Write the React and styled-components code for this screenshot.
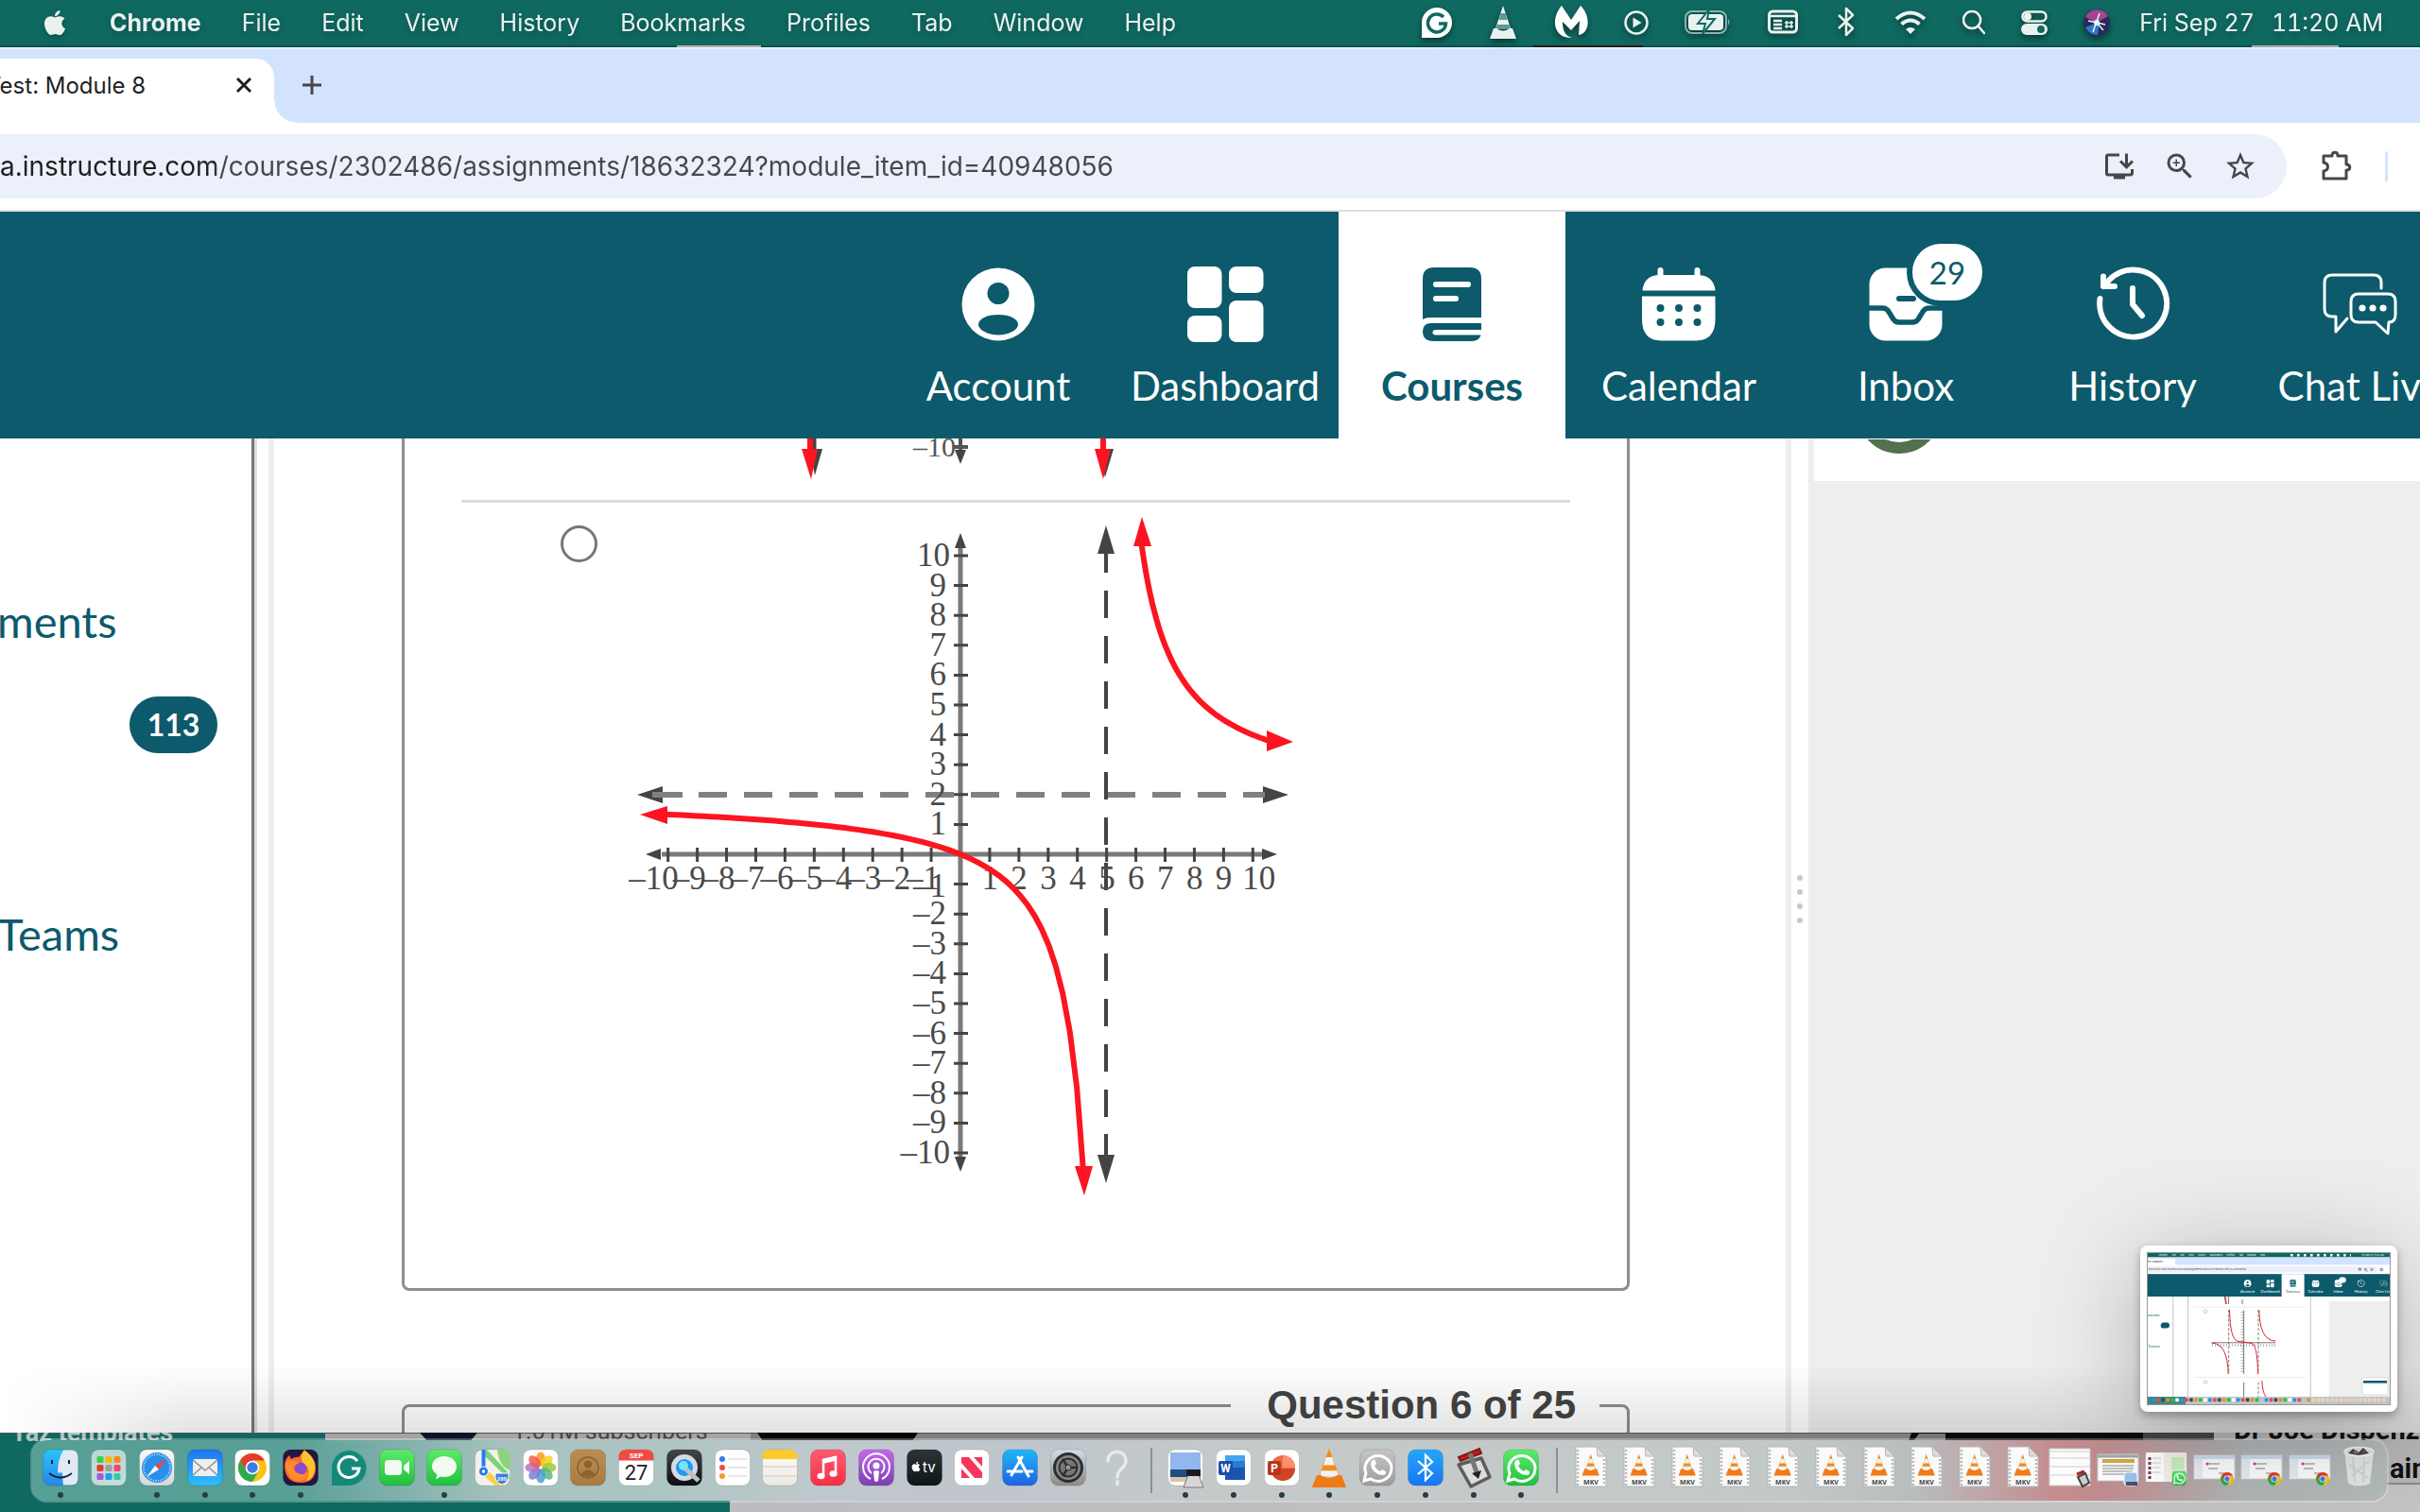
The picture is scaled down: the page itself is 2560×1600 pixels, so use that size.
import React from "react";
import styled, { createGlobalStyle, css } from "styled-components";
import { FaApple } from "react-icons/fa";
import { MdStarOutline, MdZoomIn, MdInstallDesktop } from "react-icons/md";

const teal = "#0c5a6b";
const ui = `Inter, "Liberation Sans", sans-serif`;
const lato = `Lato, "Liberation Sans", sans-serif`;

const Global = createGlobalStyle`
  * { box-sizing: border-box; }
  body { margin: 0; overflow: hidden; background: #fff; }
  button { border: 0; padding: 0; background: none; font: inherit; color: inherit; }
  a { color: inherit; text-decoration: none; }
`;

const Screen = styled.div`
  height: 100vh;
  display: flex;
  flex-direction: column;
  overflow: hidden;
  font-family: ${ui};
`;

/* ---------- menu bar ---------- */
const MenuBar = styled.header`
  position: relative;
  flex: none;
  height: 50px;
  display: flex;
  align-items: center;
  justify-content: space-between;
  padding: 0 39px 0 43px;
  background: #0f6961;
  border-bottom: 2px solid #0b4f4b;
  color: #eaf2f0;
  font-size: 25px;
  white-space: nowrap;
`;
const MenuGroup = styled.nav`
  display: flex;
  align-items: center;
  gap: ${(p) => p.$gap}px;
  filter: drop-shadow(0 3px 3px rgba(0, 0, 0, 0.25));
`;
const MenuButton = styled.button`
  font-weight: ${(p) => (p.$strong ? 700 : 400)};
  line-height: 32px;
`;
const Sliver = styled.i`
  position: absolute;
  bottom: -2px;
  left: ${(p) => p.$left}px;
  width: ${(p) => p.$width}px;
  height: 2px;
  background: ${(p) => p.$color};
`;
const Clock = styled.time`
  display: flex;
  gap: 18px;
  font-variant-numeric: tabular-nums;
`;

/* ---------- browser chrome ---------- */
const TabStrip = styled.div`
  flex: none;
  height: 80px;
  display: flex;
  align-items: flex-end;
  background: #d3e3fd;
  border-top: 2px solid #e6effd;
  color: #1f1f1f;
`;
const Tab = styled.div`
  position: relative;
  width: 290px;
  height: 68px;
  display: flex;
  align-items: center;
  justify-content: space-between;
  padding: 0 23px 12px 0;
  background: #fff;
  border-radius: 0 20px 0 0;
  font-size: 24px;
  &::after {
    content: "";
    position: absolute;
    right: -24px;
    bottom: 0;
    width: 24px;
    height: 24px;
    background: radial-gradient(circle at 100% 0, transparent 23px, #fff 24px);
  }
`;
const TabTitle = styled.span`
  margin-left: -14px;
  white-space: nowrap;
`;
const IconButton = styled.button`
  display: flex;
  color: ${(p) => p.$color || "#474747"};
`;
const NewTab = styled(IconButton)`
  margin: 0 0 29px 29px;
`;
const Toolbar = styled.div`
  flex: none;
  height: 94px;
  display: flex;
  align-items: center;
  gap: 34px;
  padding-right: 34px;
  background: #fff;
  border-bottom: 2px solid #dfdfdf;
`;
const Omnibox = styled.div`
  flex: 1;
  height: 68px;
  display: flex;
  align-items: center;
  gap: 28px;
  padding-right: 31px;
  border-radius: 0 34px 34px 0;
  background: #ecf0fa;
`;
const Url = styled.input`
  flex: 1;
  min-width: 0;
  height: 40px;
  padding: 0;
  border: 0;
  outline: 0;
  text-indent: -2px;
  font: 28px ${ui};
  color: transparent;
  background: linear-gradient(90deg, #1f1f1f 228px, #474747 228px);
  background-clip: text;
  -webkit-background-clip: text;
`;
const ProfileRule = styled.i`
  width: 3px;
  height: 32px;
  border-radius: 2px;
  background: #d3e3fd;
`;

/* ---------- course navigation ---------- */
const Nav = styled.nav`
  flex: none;
  height: 240px;
  display: flex;
  justify-content: flex-end;
  padding-left: 16px;
  margin-right: -56px;
  background: ${teal};
  font-family: ${lato};
`;
const NavLink = styled.a`
  position: relative;
  width: 240px;
  display: flex;
  flex-direction: column;
  align-items: center;
  gap: 14px;
  padding-top: 56px;
  color: #fff;
  font-size: 42px;
  line-height: 60px;
  white-space: nowrap;
  ${(p) =>
    p.$active &&
    css`
      background: #fff;
      color: ${teal};
      font-weight: 700;
    `}
`;
const NavBadge = styled.span`
  position: absolute;
  top: 28px;
  right: 33px;
  width: 86px;
  height: 72px;
  border: 6px solid ${teal};
  border-radius: 36px;
  background: #fff;
  color: ${teal};
  font-size: 33px;
  text-align: center;
`;

/* ---------- page ---------- */
const Page = styled.div`
  flex: 1;
  min-height: 0;
  display: flex;
  overflow: hidden;
  background: #fff;
`;
const Side = styled.aside`
  flex: none;
  width: 272px;
  display: flex;
  flex-direction: column;
  padding-top: 165px;
  border-right: 3px solid #ddd;
  box-shadow: inset -3px 0 #77787b;
  color: ${teal};
  font: 47px/56px ${lato};
`;
const SideLink = styled.a`
  margin-left: -3px;
`;
const Count = styled.span`
  align-self: flex-end;
  width: 93px;
  margin: 52px 39px 163px 0;
  border-radius: 30px;
  background: ${teal};
  color: #fff;
  font-size: 32px;
  font-weight: 700;
  line-height: 60px;
  text-align: center;
`;
const Main = styled.main`
  flex: 1;
  min-width: 0;
  margin-left: 12px;
  padding: 0 165px 0 135px;
  border: solid #eee;
  border-width: 0 6px;
`;
const Card = styled.section`
  padding: 0 60px;
  border: 3px solid #8e8e8e;
  border-top: 0;
  border-radius: 0 0 8px 8px;
`;
const Previous = styled.div`
  display: flex;
  height: 65px;
  padding-left: 172px;
  border-bottom: 0;
`;
const Rule = styled.hr`
  height: 3px;
  margin: 0;
  border: 0;
  background: #dcdcdc;
`;
const Option = styled.label`
  display: flex;
  align-items: flex-start;
  gap: 28px;
  padding: 12px 0 95px 105px;
`;
const Radio = styled.input`
  appearance: none;
  width: 39px;
  height: 39px;
  margin: 12px 0 0;
  border: 3px solid #767676;
  border-radius: 50%;
  background: #fff;
`;
const Question = styled.fieldset`
  height: 200px;
  margin: 91px 0 0;
  padding: 0 29px;
  border: 3px solid #8e8e8e;
  border-radius: 8px;
`;
const Legend = styled.legend`
  margin-left: auto;
  padding: 0 25px 0 38px;
  color: #444;
  font: 700 42px/60px "Liberation Sans", Arial, sans-serif;
`;
const Grip = styled.div`
  width: 18px;
  display: flex;
  flex-direction: column;
  align-items: center;
  gap: 9px;
  padding-top: 462px;
  i {
    width: 6px;
    height: 6px;
    border-radius: 50%;
    background: #c8c8c8;
  }
`;
const Panel = styled.aside`
  flex: none;
  width: 647px;
  padding-left: 6px;
  background: #eee;
`;
const PanelHead = styled.div`
  height: 45px;
  padding-left: 54px;
  background: #fff;
`;

/* ---------- desktop and dock ---------- */
const Desktop = styled.footer`
  position: relative;
  flex: none;
  height: 84px;
  padding: 6px 33px 10px 32px;
  background: linear-gradient(90deg, #0f6961 772px, #bcbcc0 772px, #c4c4c4);
  &::before {
    content: "";
    position: absolute;
    z-index: 1;
    left: 0;
    right: 0;
    bottom: 100%;
    height: 72px;
    background: linear-gradient(transparent, rgba(0, 0, 0, 0.11));
    mask-image: linear-gradient(90deg, transparent, #000 200px);
  }
`;
const Behind = styled.div`
  position: absolute;
  inset: 0;
  overflow: hidden;
  svg { position: absolute; top: 0; }
`;
const DockBar = styled.nav`
  position: relative;
  height: 68px;
  display: flex;
  padding: 6px 5px 0;
  border: 2px solid rgba(255, 255, 255, 0.28);
  border-radius: 18px;
  background: linear-gradient(90deg, #569f95 0, #589f96 11%, #a6c1be 20%, #adc5c2 27%, #bfc8cc 33%, #bfc6cd 42%, #c4caca 50%, #c3c9c9 74%, #b9bcbc 80%, #c48c8f 86%, #c08d90 88%, #b0b6b6 94%, #b3baba 100%);
  background-clip: padding-box;
  background-origin: border-box;
  background-color: #a9bdbb;
`;
const DockItem = styled.button`
  flex: 1;
  min-width: 0;
  display: flex;
  flex-direction: column;
  align-items: center;
  gap: 3px;
  svg { flex: none; }
  &::after {
    content: "";
    width: 6px;
    height: 6px;
    border-radius: 50%;
    background: ${(p) => (p.$running ? "#26403f" : "transparent")};
  }
`;
const DockRule = styled.i`
  flex: none;
  width: 23px;
  height: 48px;
  border-left: 2px solid #899194;
  margin: 2px -11px 0 11px;
`;
const Thumb = styled.figure`
  position: absolute;
  z-index: 2;
  right: 24px;
  bottom: 106px;
  margin: 0;
  padding: 8px;
  border-radius: 8px;
  background: #fff;
  box-shadow: 0 4px 10px rgba(0, 0, 0, 0.3), 0 20px 110px rgba(0, 0, 0, 0.28);
  svg { display: block; outline: 1px solid #999; }
`;

/* ---------- graph ---------- */
const X0 = 1016, Y0 = 904, UX = 30.93, UY = 31.6;
const px = (x) => X0 + x * UX;
const py = (y) => Y0 - y * UY;
const curve = (a, b) => {
  const pts = [];
  for (let i = 0; i <= 60; i++) {
    const x = a + ((b - a) * i) / 60;
    pts.push(`${px(x).toFixed(1)},${py(2 + 10 / (x - 5)).toFixed(1)}`);
  }
  return pts.join(" ");
};
const ticks = Array.from({ length: 21 }, (_, i) => i - 10).filter((n) => n);
const lab = (n) => (n < 0 ? "–" + -n : "" + n);

function Graph() {
  return (
    <svg width="720" height="724" viewBox="660 544 720 724" role="img" aria-label="Rational function graph">
      <g stroke="#7a7a7a" strokeWidth="5">
        <path d={`M700 ${Y0}H1336M${X0} 580V1226`} />
      </g>
      <g stroke="#444" strokeWidth="3">
        {ticks.map((n) => (
          <path key={n} d={`M${px(n)} ${Y0 - 7}v15M${X0 - 7} ${py(n)}h15`} />
        ))}
      </g>
      <g fill="#444">
        <path d="M683 904l16-6v12zM1351 904l-16-6v12zM1016 564l-6 16h12zM1016 1240l-6-16h12z" />
        <path d="M674 841l27-9v18zM1363 841l-27-9v18zM1170 556l-9 30h18zM1170 1252l-9-30h18z" />
      </g>
      <path d="M698 841h24M739 841H1322" stroke="#808080" strokeWidth="6" strokeDasharray="30 18" />
      <path d="M1316 841h22M690 841h30" stroke="#808080" strokeWidth="6" />
      <path d="M1170 580v26M1170 1200v24" stroke="#444" strokeWidth="4" />
      <path d="M1170 625V1190" stroke="#444" strokeWidth="4" strokeDasharray="29 19" />
      <g fill="#4a4a4a" fontFamily='"Liberation Serif", serif' fontSize="35">
        {ticks.map((n) => (
          <text key={n} x={Math.abs(n) === 10 ? 1005 : 1001} y={py(n) + (n === -1 ? 13 : 11)} textAnchor="end">{lab(n)}</text>
        ))}
        {ticks.map((n) => (
          <text key={n} x={n === 10 ? px(n) + 24 : n === -10 ? px(n) + 11 : px(n) + 9} y="941" textAnchor="end">{lab(n)}</text>
        ))}
      </g>
      <g fill="none" stroke="#fc1520" strokeWidth="6">
        <polyline points={curve(-10.2, 4.22)} />
        <polyline points={curve(6.2, 10.5)} />
      </g>
      <path fill="#fc1520" d="M677 862l29-9v19zM1208 547l-9 31h19zM1368 785l-28-12v22zM1147 1265l-10-31h19z" />
    </svg>
  );
}

const PrevGraph = () => (
  <svg width="720" height="65" viewBox="660 464 720 65" aria-hidden="true">
    <path d="M1016 464v16M1009 473h15" stroke="#555" strokeWidth="4" />
    <path d="M1016 491l-6-15h12zM862 503l-6-28h14zM1169 505l-8-30h17z" fill="#444" />
    <path d="M861 464v14" stroke="#444" strokeWidth="5" />
    <path d="M857 464v16M1167 464v16" stroke="#fc1520" strokeWidth="6" />
    <path d="M858 507l-10-32h17zM1167 507l-9-32h17z" fill="#fc1520" />
    <text x="1011" y="483" textAnchor="end" fontFamily='"Liberation Serif", serif' fontSize="30" fill="#555">–10</text>
  </svg>
);

/* ---------- navigation icons ---------- */
const navIcons = {
  Account: (
    <>
      <circle cx="42" cy="42" r="38.5" fill="#fff" />
      <circle cx="42" cy="30.5" r="11.5" fill={teal} />
      <path d="M42 53c13 0 21 5 21 10.500s-10 11-21 11-21-5.500-21-11S29 53 42 53z" fill={teal} />
    </>
  ),
  Dashboard: (
    <g fill="#fff">
      <rect x="2" y="2" width="36.500" height="44" rx="8" />
      <rect x="2" y="54" width="36.500" height="28" rx="8" />
      <rect x="46" y="2" width="36.500" height="28" rx="8" />
      <rect x="46" y="38" width="36.500" height="44" rx="8" />
    </g>
  ),
  Courses: (
    <>
      <path fill={teal} d="M11 58V15Q11 3 23 3h38q12 0 12 12v41H19q-5 0-8 2z" />
      <path fill={teal} d="M73 62v7H25q-3.500 0-3.500 2.800T25 74.500h47.500Q71 81 63 81H23q-12 0-12-10 0-9 9-9z" />
      <path stroke="#fff" strokeWidth="6" strokeLinecap="round" d="M25 21h34M25 36h21" />
    </>
  ),
  Calendar: (
    <>
      <path fill="#fff" d="M3.500 27.500Q5 11 22 11h39q18 0 19.500 16.500zM3 33.500h77.500V58q0 22-20 22.500H23Q3 80 3 58z" />
      <path stroke="#fff" strokeWidth="6" strokeLinecap="round" d="M22.500 6v8M61.500 6v8" />
      <g fill={teal}>
        {[22.5, 42, 61.5].map((x) => [46, 61].map((y) => <circle key={x + "-" + y} cx={x} cy={y} r="4" />))}
      </g>
    </>
  ),
  Inbox: (
    <>
      <rect x="3.500" y="3.500" width="77" height="77" rx="17" fill="#fff" />
      <path fill="none" stroke={teal} strokeWidth="5.500" d="M3 46h14q5 0 7 4l5 8q2 3 6 3h14q4 0 6-3l5-8q2-4 7-4h14" />
      <path stroke={teal} strokeWidth="6" strokeLinecap="round" d="M35 36h15" />
    </>
  ),
  History: (
    <g fill="none" stroke="#fff" strokeWidth="6" strokeLinecap="round" strokeLinejoin="round">
      <path d="M7.500 36a35.500 35.500 0 1 0 10-20l-6 7" />
      <path d="M11 12.500V23h12" />
      <path d="M42 25v17l10 12" />
    </g>
  ),
  "Chat Live": (
    <>
      <g fill="none" stroke="#fff" strokeWidth="3" strokeLinejoin="round" strokeLinecap="round">
        <path d="M65 25v-6q0-8-8-8H13q-8 0-8 8v28q0 8 8 8h4v16l12-14" />
        <path d="M41 31h31q8 0 8 8v14q0 8-7 8l-1 12-13-12H41q-8 0-8-8V39q0-8 8-8z" />
      </g>
      <g fill="#fff"><circle cx="45" cy="46" r="3.600" /><circle cx="56" cy="46" r="3.600" /><circle cx="67" cy="46" r="3.600" /></g>
    </>
  ),
};

/* ---------- status icons ---------- */
const Cone = ({ grey }) => (
  <>
    <path d="M16 0l8 24H8z" transform="translate(0 1)" fill={grey ? "#eaf2f0" : "#f58a1f"} />
    <path d="M13.500 9h5l2 7h-9z" fill={grey ? "#5b9a92" : "#f2f2f2"} />
    <path d="M9.500 21h13l1 5h-15z" fill={grey ? "#5b9a92" : "#f2f2f2"} />
    <path d="M6 25h3q7 5 14 0h3l4 11H2z" fill={grey ? "#eaf2f0" : "#ee7b16"} />
  </>
);
const status = [
  [32, <><path fill="#fff" d="M16 3a16 16 0 1 1 0 32H0V19A16 16 0 0 1 16 3z" /><path d="M23 13a9.500 9.500 0 1 0 2.500 7H18" fill="none" stroke="#0f6961" strokeWidth="3.500" /></>],
  [32, <Cone grey />],
  [36, <path fill="#fff" d="M8 1l10 15L28 1c11 11 10 29-2 31l1-15-9 10-9-9c0 10 3 15 10 17C-1 36-4 15 8 1z" />],
  [26, <><circle cx="13" cy="19" r="11.500" fill="none" stroke="currentColor" strokeWidth="2.500" /><path fill="currentColor" d="M9.500 13.500v11l9-5.500z" /></>],
  [50, <><rect x="1" y="7" width="43" height="23" rx="7" fill="none" stroke="#87b4af" strokeWidth="2" /><rect x="4" y="10" width="37" height="17" rx="4" fill="currentColor" /><path d="M46 15q3 3 0 7z" fill="#87b4af" /><path d="M26 5L14 20h8l-3 11 13-16h-8z" fill="currentColor" stroke="#0f6961" strokeWidth="2" /></>],
  [32, <><rect x="1.500" y="7" width="29" height="22" rx="4" fill="none" stroke="currentColor" strokeWidth="3" /><path d="M3 12h26M6 17h9M6 21h9M6 25h9" stroke="currentColor" strokeWidth="2.500" /><path d="M20 17v8M25 17v8M18 19h9M18 23h9" stroke="currentColor" strokeWidth="1.500" /></>],
  [26, <path d="M5 11l15 14-7 7V4l7 7L5 25" fill="none" stroke="currentColor" strokeWidth="2.500" strokeLinejoin="round" />],
  [34, <><path d="M2 15q15-13 30 0M7.500 20.500q9.500-8 19 0" fill="none" stroke="currentColor" strokeWidth="4" /><path d="M17 31l-5-5q5-4 10 0z" fill="currentColor" /></>],
  [24, <path d="M17 23l6 7M10 7a9 9 0 1 0 .1 0z" fill="none" stroke="currentColor" strokeWidth="2.600" strokeLinecap="round" />],
  [28, <><rect x="1.500" y="7.500" width="25" height="10" rx="5" fill="none" stroke="currentColor" strokeWidth="2.500" /><circle cx="7" cy="12.500" r="4" fill="currentColor" /><rect y="20" width="28" height="12" rx="6" fill="currentColor" /><circle cx="21" cy="26" r="4" fill="#0f6961" /></>],
  [28, <><circle cx="14" cy="19" r="14" fill="#2b2a5a" /><path d="M2 13a13.500 13.500 0 0 1 24-1l-12 7z" fill="#a4458f" /><path d="M2 24a13.500 13.500 0 0 0 13 8l2-14z" fill="#2f79c9" /><path d="M5 17l18 4M17 9l-7 20M14 19l7 8" stroke="#e6f7ff" strokeWidth="1.500" /><circle cx="14" cy="19" r="3" fill="#e6f7ff" /></>],
];

/* ---------- dock icons ---------- */
const Tile = ({ id, a, b = a }) => (
  <>
    <defs><linearGradient id={id} x2="0" y2="1"><stop stopColor={a} /><stop offset="1" stopColor={b} /></linearGradient></defs>
    <rect x="4.500" y="4" width="37" height="38" rx="8" fill={`url(#${id})`} stroke="rgba(0,0,0,.12)" />
  </>
);
const ChromeMark = ({ r = 15, x = 23, y = 23 }) => (
  <g transform={`translate(${x} ${y}) scale(${r / 15})`}>
    <circle r="15" fill="#fbc116" />
    <path d="M-13 -7.500A15 15 0 0 1 13 -7.500H0L-6.500 3.700z" fill="#e33b2e" />
    <path d="M-13 -7.500A15 15 0 0 0 0 15L6.500 3.700-6.500 3.700z" fill="#2da94f" />
    <circle r="7.300" fill="#fff" /><circle r="5.700" fill="#3c7ded" />
  </g>
);
const Phone = ({ id, a, b }) => (
  <>
    <Tile id={id} a={a} b={b} />
    <path d="M9 37l2-8a14 13.500 0 1 1 5 6z" fill="none" stroke="#fff" strokeWidth="3" />
    <path d="M17 16q3-3 4 0l1 3-2 2q2 4 6 6l2-2 4 2q1 4-4 4-11-2-12-12z" fill="#fff" />
  </>
);
const Mkv = () => (
  <>
    <path d="M7 1h22l10 10v32H7z" fill="#fafafa" stroke="#b5b5b5" />
    <path d="M29 1l10 10H30z" fill="#ddd" stroke="#b5b5b5" />
    <path d="M9 4v38M37 14v28" stroke="#bbb" strokeWidth="2.500" strokeDasharray="2 2" />
    <g transform="translate(12.300 8) scale(.65)"><Cone /></g>
    <text x="23" y="41" textAnchor="middle" fontSize="7" fontWeight="700" fontFamily="Open Sans, sans-serif" fill="#444">MKV</text>
  </>
);
const Win = ({ kind }) => (
  <>
    <rect x="1" y={kind === "doc" ? 9 : kind === "tall" ? 3 : 10} width="43" height={kind === "tall" ? 39 : kind === "doc" ? 28 : 25} fill="#fdfdfd" stroke="#ccc" />
    {kind === "tall" && <path d="M1 6h43M1 13h43M1 22h43M1 31h43" stroke="#ddd" strokeWidth="1.500" />}
    {kind === "doc" && <><path d="M1 11h43" stroke="#9aa" strokeWidth="3" /><path d="M6 16h34" stroke="#d2aa45" strokeWidth="4" /><path d="M6 21h33M6 24h33M6 27h32M6 30h30" stroke="#888" /></>}
    {kind === "chat" && <><rect x="1" y="7" width="43" height="31" fill="#f4efe8" /><rect x="1" y="7" width="19" height="31" fill="#fff" /><path d="M5 12v24" stroke="#835" strokeWidth="3" strokeDasharray="3 2" /><path d="M8 13h9M8 18h9M8 23h9M8 28h9" stroke="#ccc" /><rect x="28" y="12" width="13" height="13" fill="#c9edbd" /></>}
    {kind === "web" && <><path d="M1 12h43" stroke="#cfdcf5" strokeWidth="4" /><rect x="1" y="14" width="9" height="21" fill="#e7ecf5" /><path d="M16 19h12M16 24h10M27 29h10" stroke="#aaa" strokeWidth="1.500" /><circle cx="15" cy="19" r="1.500" fill="#a4a" /></>}
    {kind === "web" && <ChromeMark r={7} x={36} y={35} />}
    {kind === "chat" && <g transform="translate(27 25) scale(.4)"><Phone id="wm" a="#5eea6c" b="#20c03c" /></g>}
    {kind === "doc" && <><rect x="29" y="28" width="14" height="14" rx="3" fill="#9cc4ef" stroke="#fff" /><path d="M31 38h12v4H31z" fill="#456" /></>}
    {kind === "tall" && <><path d="M31 33l8-4 4 10-7 4z" fill="#ccc" stroke="#444" strokeWidth="2" /><path d="M30 30l8-3" stroke="#b4231c" strokeWidth="3" /></>}
  </>
);

const dock = [
  ["Finder", 1, <><Tile id="fi" a="#2bc3fb" b="#2487ec" /><path d="M26 4.500h8q7.500 0 7.500 8v21q0 8-7.500 8h-8q-1-6-1-13h-5q0-14 6-24z" fill="#e3e9f3" /><path d="M14 15v4M32 15v4" stroke="#123" strokeWidth="2" /><path d="M11 29q12 9 24 0" fill="none" stroke="#123" strokeWidth="1.800" /></>],
  ["Launchpad", 0, <><Tile id="la" a="#b9d8d4" b="#c7dcd9" />{["#3ecb4a", "#fbb614", "#f88a1c", "#ea3a30", "#9aa0a3", "#f8466a", "#a55ad8", "#1e9df5", "#31cda0"].map((c, i) => <rect key={i} x={10.5 + (i % 3) * 9} y={11 + Math.floor(i / 3) * 9} width="7" height="7" rx="1.500" fill={c} />)}</>],
  ["Safari", 1, <><Tile id="sa" a="#fafafa" b="#d8d8d8" /><circle cx="23" cy="23" r="16" fill="#2a8fe9" /><circle cx="23" cy="23" r="14" fill="none" stroke="#bfe0fb" strokeWidth="2" strokeDasharray="1 1.500" /><path d="M34 13L21 21l4 4z" fill="#f0443e" /><path d="M12 33l9-12 4 4z" fill="#fff" /></>],
  ["Mail", 1, <><Tile id="ma" a="#1f74f2" b="#2cc0fb" /><rect x="10" y="14" width="26" height="18" rx="2" fill="#eee" /><path d="M10 15l13 11 13-11M10 31l9-8M36 31l-9-8" fill="none" stroke="#888" strokeWidth="1.200" /></>],
  ["Chrome", 1, <><Tile id="ch" a="#fff" /><ChromeMark /></>],
  ["Firefox", 1, <><Tile id="ff" a="#241640" /><path d="M6 22q0-8 5-12l2 4q5-3 8-2l6-8q12 9 12 19 0 16-16 16T6 22z" fill="#ff6a2a" /><path d="M27 5q13 9 11 20-2 10-9 12 5-9 1-15-6-4-6-9 0-5 3-8z" fill="#ffc52e" /><circle cx="23" cy="24" r="6.500" fill="#8a4bd3" /><path d="M7 18q4-5 9-2l6 1q-4 4-7 4 1 8 8 9 6 1 9-4-2 12-12 11Q9 36 7 18z" fill="#ff8c2c" /></>],
  ["Grammarly", 0, <><path d="M23 5a18.500 18.500 0 1 1 0 37H5V23A18.500 18.500 0 0 1 23 5z" fill="#13897a" /><path d="M32 16a11 11 0 1 0 2 8h-8" fill="none" stroke="#fff" strokeWidth="3" /></>],
  ["FaceTime", 0, <><Tile id="fa" a="#5eea6c" b="#20c03c" /><rect x="10" y="15" width="18" height="16" rx="4" fill="#f2fbf2" /><path d="M30 21l6-5v14l-6-5z" fill="#f2fbf2" /></>],
  ["Messages", 1, <><Tile id="me" a="#5eea6c" b="#20c03c" /><path d="M23 11c8 0 13 5 13 11s-5 11-13 11l-4-.5-5 3 1.500-5C12 28 10 25 10 22c0-6 5-11 13-11z" fill="#f2fbf2" /></>],
  ["Maps", 0, <><Tile id="mp" a="#f4f1ea" /><path d="M28 4h6q7.500 0 7.500 8v14Q30 22 28 4z" fill="#8bd47a" /><path d="M17 4l24 26v6L12 8z" fill="#7cd179" /><path d="M15 24l22 18H26L12 30z" fill="#f9cf4a" /><path d="M13.500 4v24" stroke="#2a7df0" strokeWidth="4" /><circle cx="13.500" cy="27" r="5" fill="#1e7cf0" stroke="#fff" /><circle cx="13.500" cy="27" r="1.800" fill="#fff" /><path d="M26 29h14v5q-1 5-7 7-6-2-7-7z" fill="#3d7fdc" stroke="#fff" /><text x="33" y="37" textAnchor="middle" fontSize="6" fontWeight="700" fontFamily="Roboto, sans-serif" fill="#fff">280</text></>],
  ["Photos", 0, <><Tile id="ph" a="#fff" />{["#fb9a1e", "#f6d21f", "#9ccb3c", "#5cba7d", "#4f9fd8", "#7f7fcf", "#b673c2", "#ef5b52"].map((c, i) => <ellipse key={c} cx="23" cy="14" rx="5" ry="7.500" fill={c} opacity=".85" transform={`rotate(${i * 45} 23 23)`} />)}</>],
  ["Contacts", 0, <><Tile id="co" a="#bb8d52" b="#a97b42" /><circle cx="23" cy="23" r="11" fill="none" stroke="#8b6331" strokeWidth="1.500" /><circle cx="23" cy="19.500" r="4" fill="#8b6331" /><path d="M15 30q8-9 16 0-8 6-16 0z" fill="#8b6331" /></>],
  ["Calendar", 0, <><Tile id="ca" a="#fff" /><path d="M4.500 15.500V12q0-8 8-8h21q8 0 8 8v3.500z" fill="#ee4b44" /><text x="23" y="13" textAnchor="middle" fontSize="8" fontWeight="700" fontFamily="Roboto, sans-serif" fill="#fff">SEP</text><text x="23" y="36" textAnchor="middle" fontSize="22" fontFamily="Roboto, sans-serif" fill="#222">27</text></>],
  ["QuickTime", 0, <><Tile id="qt" a="#42464c" b="#0c0d0f" /><circle cx="23" cy="23" r="11.500" fill="#1c9cf2" stroke="#d5dae2" strokeWidth="5" /><path d="M24 24l14 13" stroke="#b9bec8" strokeWidth="5" /><circle cx="22" cy="21" r="5" fill="#7fe0fb" /></>],
  ["Reminders", 0, <><Tile id="re" a="#fff" /><g stroke="#ccc"><path d="M18 14h20M18 23h20M18 32h20" /></g><circle cx="12" cy="14" r="3" fill="#2f7df0" /><circle cx="12" cy="23" r="3" fill="#ec4b41" /><circle cx="12" cy="32" r="3" fill="#f39a2c" /></>],
  ["Notes", 0, <><Tile id="no" a="#fcfbf8" b="#ece9e1" /><path d="M4.500 14V12q0-8 8-8h21q8 0 8 8v2z" fill="#fcca2b" /><path d="M5 22h36M5 32h36" stroke="#ccc" /></>],
  ["Music", 0, <><Tile id="mu" a="#fc5d74" b="#f92e44" /><path d="M18 32V15l13-3v17" fill="none" stroke="#fff" strokeWidth="2.500" /><path d="M17 14l15-3.500v5L17 19z" fill="#fff" /><ellipse cx="15.500" cy="32" rx="4" ry="3.200" fill="#fff" /><ellipse cx="28.500" cy="29.500" rx="4" ry="3.200" fill="#fff" /></>],
  ["Podcasts", 0, <><Tile id="po" a="#c268ec" b="#7f3cb4" /><g fill="none" stroke="#fff" strokeWidth="2"><path d="M17 35a14 14 0 1 1 12 0M18 29a8.500 8.500 0 1 1 10 0" /></g><circle cx="23" cy="21" r="3.500" fill="#fff" /><path d="M20 27q3-2 6 0l-1 10q-2 2-4 0z" fill="#fff" /></>],
  ["TV", 0, <><Tile id="tv" a="#2c3536" b="#0e1516" /><g transform="translate(8 16)"><FaApple size={12} color="#fff" /></g><text x="21" y="28" fontSize="15" fontFamily="Inter, sans-serif" fill="#fff">tv</text></>],
  ["News", 0, <><Tile id="ne" a="#fff" /><path d="M12 12h8l14 16v6h-8L12 18z" fill="#f9355a" /><path d="M12 24v10h9zM34 22V12h-9z" fill="#f9355a" /></>],
  ["App Store", 0, <><Tile id="as" a="#1fb6f7" b="#1f63e4" /><path d="M25 12L14 31M21 12l11 20M10 27h15M29 27h7" stroke="#fff" strokeWidth="3" strokeLinecap="round" /></>],
  ["Settings", 0, <><Tile id="se" a="#cfdfe6" b="#8e8a87" /><circle cx="23" cy="23" r="14.500" fill="#888" stroke="#2e2e2e" strokeWidth="3" /><circle cx="23" cy="23" r="9.500" fill="#777" stroke="#2e2e2e" strokeWidth="2" /><path d="M23 23h10M23 23l-6-9M23 23l-6 9" stroke="#2e2e2e" strokeWidth="2.500" /><circle cx="23" cy="23" r="3" fill="#999" stroke="#2e2e2e" /></>],
  ["Missing app", 0, <path d="M14 16c0-13 19-13 19 0 0 8-9 8-9 17M24 37.500v3" fill="none" stroke="#e6eaee" strokeWidth="3.500" strokeLinecap="round" />],
  null,
  ["Preview", 1, <><Tile id="pr" a="#fff" /><path d="M7 7h32v18H7z" fill="#93b7ec" /><path d="M7 25h32v8H7z" fill="#1e4f80" /><path d="M7 33h32v5H7z" fill="#d8c6ad" /><path d="M25 28h13v5l4 11H21l4-11z" fill="#d7d7d7" stroke="#777" /><path d="M24 25h15v7H24z" fill="#1d1d1f" /></>],
  ["Word", 1, <><Tile id="wo" a="#fff" /><path d="M14 10h21v26H14z" fill="#1c55b0" /><path d="M14 10h21v6H14z" fill="#42a5ee" /><path d="M14 16h21v7H14z" fill="#2b7cd3" /><rect x="7" y="16" width="15" height="15" rx="2" fill="#1a4fa8" /><text x="14.500" y="28" textAnchor="middle" fontSize="12" fontWeight="700" fontFamily="Roboto, sans-serif" fill="#fff">W</text></>],
  ["PowerPoint", 1, <><Tile id="pp" a="#fff" /><circle cx="24" cy="23" r="13" fill="#ec6a48" /><path d="M24 10a13 13 0 0 1 13 13H24z" fill="#fb8f6c" /><path d="M11 24h26a13 13 0 0 1-26 0z" fill="#cf4427" /><rect x="8" y="16" width="14" height="15" rx="2" fill="#b9361b" /><text x="15" y="28" textAnchor="middle" fontSize="12" fontWeight="700" fontFamily="Roboto, sans-serif" fill="#fff">P</text></>],
  ["VLC", 1, <g transform="translate(2.200 1.500) scale(1.300 1.180)"><Cone /></g>],
  ["WhatsApp Beta", 1, <Phone id="wg" a="#c6c6c6" b="#9c9c9c" />],
  ["Bluetooth", 1, <><Tile id="bt" a="#24a8fb" b="#1875f3" /><path d="M15 16l15 13-7 7V10l7 7-15 13" fill="none" stroke="#fff" strokeWidth="2.200" /></>],
  ["Archive", 1, <><path d="M7 20l24-7 9 20-20 10z" fill="#dcdcdc" stroke="#5c5c5c" strokeWidth="3.500" strokeLinejoin="round" /><path d="M7 12l22-9 2 5-22 8z" fill="#b4231c" stroke="#8b1712" strokeWidth="2" /><path d="M19 8l7 20" stroke="#777" strokeWidth="5" /><path d="M21 29l10-3-3 9z" fill="#222" /></>],
  ["WhatsApp", 1, <Phone id="wa" a="#5eea6c" b="#20c03c" />],
  null,
  ...Array.from({ length: 10 }, (_, i) => ["Video " + (i + 1), 0, <Mkv />]),
  ["Archive window", 0, <Win kind="tall" />],
  ["Document window", 0, <Win kind="doc" />],
  ["Chat window", 0, <Win kind="chat" />],
  ["Browser window 1", 0, <Win kind="web" />],
  ["Browser window 2", 0, <Win kind="web" />],
  ["Browser window 3", 0, <Win kind="web" />],
  ["Trash", 0, <><path d="M8 5h31l-4 35q-12 5-23 0z" fill="#e8eaea" opacity=".9" /><path d="M17 12l2 26M29 12l-1 27M13 20l20 14M34 16L16 32" stroke="#cfd3d3" strokeWidth="2" /><ellipse cx="23.500" cy="6" rx="15.500" ry="4.500" fill="#ddd" stroke="#f5f5f5" strokeWidth="1.500" /><path d="M12 8l5-5 6 4 5-5 6 6-11 2z" fill="#444" /><path d="M17 7l4-2 2 3zM27 7l4-2" fill="#3a8" stroke="#a55" /></>],
];

/* Small preview of the last capture, drawn in screen units */
const miniNav = [["Account", 1056], ["Dashboard", 1296], ["Courses", 1536], ["Calendar", 1776], ["Inbox", 2016], ["History", 2256], ["Chat Live", 2496]];
const MiniScreen = () => (
  <svg width="256" height="160" viewBox="0 0 2560 1600" role="img" aria-label="Recent capture">
    <rect width="2560" height="1600" fill="#fff" />
    <rect width="2560" height="45" fill="#0f6961" />
    <rect y="45" width="2560" height="80" fill="#d3e3fd" />
    <rect y="60" width="290" height="70" fill="#fff" />
    <rect y="140" width="2420" height="65" fill="#ecf0fa" />
    <g fontFamily="Inter, sans-serif" fontSize="25" fill="#fff">
      {[["Chrome", 114], ["File", 257], ["Edit", 342], ["View", 429], ["History", 529], ["Bookmarks", 657], ["Profiles", 832], ["Tab", 965], ["Window", 1050], ["Help", 1187]].map(([t, x]) => <text key={t} x={x} y="32">{t}</text>)}
      <text x="2265" y="32">Fri Sep 27 11:20 AM</text>
      <text x="0" y="98" fill="#222">est: Module 8</text>
      <text x="0" y="184" fill="#444">.instructure.com/courses/2302486/assignments/18632324?module_item_id=40948056</text>
    </g>
    <path d="M1510 22h640" stroke="#fff" strokeWidth="24" strokeDasharray="26 44" />
    <g fill="none" stroke="#555" strokeWidth="7">
      <path d="M2230 162h26v18h-26zM2310 182l14 14M2460 164h24v22h-24z" />
      <circle cx="2303" cy="172" r="10" />
      <circle cx="2370" cy="174" r="11" />
    </g>
    <rect y="222" width="2560" height="238" fill={teal} />
    <rect x="1416" y="222" width="240" height="238" fill="#fff" />
    {miniNav.map(([n, x]) => (
      <g key={n}>
        <g transform={`translate(${x - 42} 280)`}>{navIcons[n]}</g>
        <text x={x} y="424" textAnchor="middle" fontFamily="Lato, sans-serif" fontSize="42" fill={n === "Courses" ? teal : "#fff"}>{n}</text>
      </g>
    ))}
    <rect x="2022" y="255" width="76" height="60" rx="30" fill="#fff" />
    <path d="M268 460V1520M425 460V1520M1722 460V1520" stroke="#aaa" strokeWidth="7" />
    <rect x="1916" y="510" width="644" height="1010" fill="#eee" />
    <path d="M488 571H1660M488 1314H1660" stroke="#ddd" strokeWidth="6" />
    <circle cx="610" cy="617" r="18" fill="none" stroke="#777" strokeWidth="4" />
    <circle cx="610" cy="1364" r="18" fill="none" stroke="#777" strokeWidth="4" />
    <g fill={teal} fontFamily="Lato, sans-serif" fontSize="46"><text x="0" y="672">ments</text><text x="0" y="1004">Teams</text></g>
    <rect x="136" y="736" width="94" height="60" rx="30" fill={teal} />
    <g stroke="#555" strokeWidth="8" fill="none">
      <path d="M1016 605V1280M680 948H1352M1016 1365V1520" />
      <path d="M857 600V1280M1170 600V1280M1170 1365V1520" strokeDasharray="30 18" />
      <path d="M1000 620V1270M680 975H1352" strokeWidth="26" strokeDasharray="8 22" opacity=".6" />
      <path d="M820 460l14 80M856 460v80M1000 490v50" />
    </g>
    <g stroke="#e0202c" strokeWidth="10" fill="none">
      <path d="M676 951Q845 955 852 1280M866 600Q870 925 960 935T1100 955Q1160 970 1165 1280M1178 600Q1182 925 1352 931M1208 1350Q1215 1480 1250 1520M815 460l10 80" />
    </g>
    <rect x="2270" y="1320" width="270" height="180" fill="#fff" stroke="#ccc" strokeWidth="6" />
    <rect x="2280" y="1350" width="250" height="26" fill={teal} />
    <rect y="1520" width="2560" height="80" fill="#bcc6c8" />
    <rect y="1520" width="400" height="80" fill="#3c8c83" />
    {dock.map((d, i) => d && <rect key={i} x={44 + i * 49.7} y="1534" width="36" height="38" rx="8" fill={i > 33 ? "#f0d2b4" : ["#2a8fe9", "#fff", "#20c03c", "#f58a1f", "#444", "#e8464e"][(i * 5) % 6]} />)}
  </svg>
);

export default function App() {
  return (
    <Screen>
      <Global />
      <MenuBar>
        <MenuGroup $gap={43}>
          <FaApple size={30} />
          {["Chrome", "File", "Edit", "View", "History", "Bookmarks", "Profiles", "Tab", "Window", "Help"].map((m, i) => (
            <MenuButton key={m} $strong={i === 0}>{m}</MenuButton>
          ))}
        </MenuGroup>
        <MenuGroup $gap={31}>
          <MenuGroup as="div" $gap={38}>
            {status.map(([w, art], i) => (
              <svg key={i} width={w} height="38" viewBox={`0 0 ${w} 38`}>{art}</svg>
            ))}
          </MenuGroup>
          <Clock><span>Fri Sep 27</span><span>11:20 AM</span></Clock>
        </MenuGroup>
        <Sliver $left={716} $width={89} $color="#b9aeb0" />
        <Sliver $left={1622} $width={116} $color="#2b1c10" />
        <Sliver $left={2382} $width={92} $color="#a9a9a9" />
      </MenuBar>
      <TabStrip>
        <Tab>
          <TabTitle>Test: Module 8</TabTitle>
          <IconButton $color="#1f1f1f" aria-label="Close tab">
            <svg width="18" height="18"><path d="M2 2l14 14M16 2L2 16" stroke="currentColor" strokeWidth="3" /></svg>
          </IconButton>
        </Tab>
        <NewTab aria-label="New tab">
          <svg width="22" height="22"><path d="M11 1v20M1 11h20" stroke="currentColor" strokeWidth="3" /></svg>
        </NewTab>
      </TabStrip>
      <Toolbar>
        <Omnibox>
          <Url aria-label="Address" defaultValue="a.instructure.com/courses/2302486/assignments/18632324?module_item_id=40948056" />
          <IconButton aria-label="Install"><MdInstallDesktop size={36} /></IconButton>
          <IconButton aria-label="Zoom"><MdZoomIn size={36} /></IconButton>
          <IconButton aria-label="Bookmark"><MdStarOutline size={36} /></IconButton>
        </Omnibox>
        <IconButton aria-label="Extensions">
          <svg width="36" height="36"><path d="M5 7h9c0-5 6-5 6 0h9v9c5 0 5 6 0 6v9H5v-8c6-1 6-8 0-9z" fill="none" stroke="currentColor" strokeWidth="3" strokeLinejoin="round" /></svg>
        </IconButton>
        <ProfileRule />
      </Toolbar>
      <Nav>
        {miniNav.map(([n]) => (
          <NavLink key={n} href="#" $active={n === "Courses"}>
            <svg width="84" height="84" viewBox="0 0 84 84">{navIcons[n]}</svg>
            {n === "Inbox" && <NavBadge>29</NavBadge>}
            <span>{n}</span>
          </NavLink>
        ))}
      </Nav>
      <Page>
        <Side>
          <SideLink href="#">ments</SideLink>
          <Count>113</Count>
          <SideLink href="#">Teams</SideLink>
        </Side>
        <Main>
          <Card>
            <Previous><PrevGraph /></Previous>
            <Rule />
            <Option>
              <Radio type="radio" name="answer" aria-label="Graph option" />
              <Graph />
            </Option>
          </Card>
          <Question>
            <Legend>Question 6 of 25</Legend>
          </Question>
        </Main>
        <Grip><i /><i /><i /><i /></Grip>
        <Panel>
          <PanelHead>
            <svg width="74" height="15" viewBox="0 0 74 15"><circle cx="36" cy="-30" r="39" fill="none" stroke="#54704f" strokeWidth="12" /></svg>
          </PanelHead>
        </Panel>
      </Page>
      <Desktop>
        <Behind>
          <svg width="2560" height="84">
            <rect x="344" width="2216" height="20" fill="#7f7f7f" />
            <rect x="344" width="450" height="20" fill="#a5a5a5" />
            <path d="M0 0h2560v1H0z" fill="#555" />
            <path d="M444 0h61l-10 12h-40z" fill="#0a1526" />
            <path d="M801 0h170l-8 12H809z" fill="#060606" />
            <path d="M2022 0h245v12H2018z" fill="#0b0b0b" />
            <path d="M2030 1h28v8h-34z" fill="#777" />
            <path d="M2267 0h75v12h-75z" fill="#444" />
            <rect x="2342" width="218" height="54" fill="#b5b5b5" />
            <path d="M2342 54h218" stroke="#888" strokeWidth="2" />
            <g fontFamily='Roboto, "Liberation Sans", sans-serif'>
              <text x="12" y="9" fontSize="27" fontWeight="700" fill="#b4c2c0">Taz templates</text>
              <text x="542" y="7" fontSize="25" fill="#444">1.01M subscribers</text>
              <text x="2363" y="7" fontSize="29" fontWeight="700" fill="#111">Dr Joe Dispenza</text>
              <text x="2528" y="48" fontSize="29" fontWeight="700" fill="#111">ain</text>
            </g>
          </svg>
        </Behind>
        <DockBar aria-label="Dock">
          {dock.map((d, i) =>
            d ? (
              <DockItem key={i} $running={d[1]} aria-label={d[0]}>
                <svg width="46" height="46" viewBox="0 0 46 46">{d[2]}</svg>
              </DockItem>
            ) : (
              <DockRule key={i} />
            )
          )}
        </DockBar>
        <Thumb><MiniScreen /></Thumb>
      </Desktop>
    </Screen>
  );
}
